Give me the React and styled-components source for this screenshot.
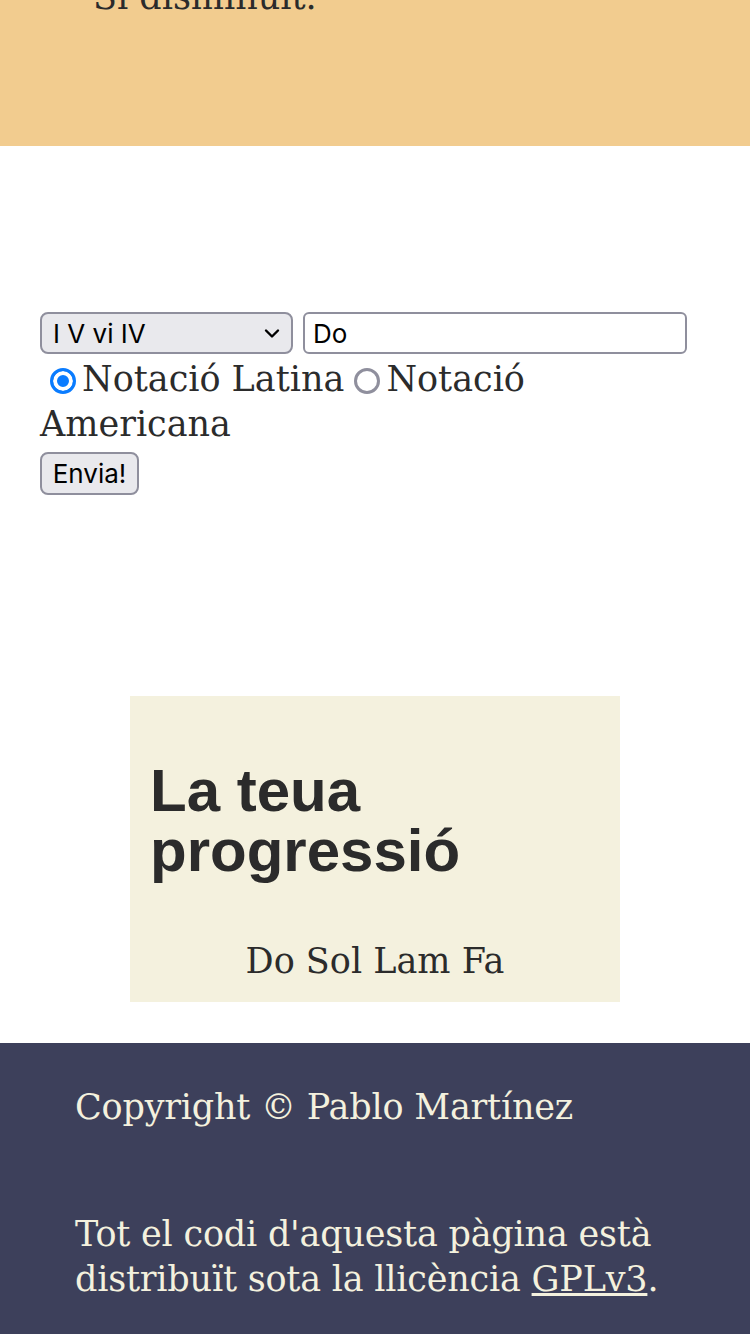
import React from 'react'
import styled, { createGlobalStyle } from 'styled-components'

const colors = {
  sand: '#f2cc8f',
  cream: '#f4f1de',
  navy: '#3d405b',
  ink: '#2b2b2b',
  control: '#e9e9ed',
  controlBorder: '#8f8f9d',
  blue: '#0a7cff',
}

const GlobalStyle = createGlobalStyle`
  html, body {
    margin: 0;
    padding: 0;
    background: #fff;
  }

  body {
    font-family: 'DejaVu Serif', Georgia, serif;
    font-size: 35px;
    line-height: 45px;
    color: ${colors.ink};
  }
`

const Banner = styled.header`
  background: ${colors.sand};
  height: 146px;
  padding: 0 93px;
  overflow: hidden;
`

const BannerText = styled.p`
  margin: -25px 0 0;
`

const Main = styled.main`
  padding: 166px 40px 0;
`

const Form = styled.form`
  display: flex;
  flex-direction: column;
  align-items: flex-start;
`

const Controls = styled.div`
  display: flex;
  align-items: flex-start;
  gap: 10px;
`

const SelectBox = styled.div`
  position: relative;
  width: 253px;
  height: 42px;
`

const Select = styled.select`
  appearance: none;
  display: block;
  width: 100%;
  height: 100%;
  box-sizing: border-box;
  margin: 0;
  padding: 0 40px 0 11px;
  background: ${colors.control};
  border: 2px solid ${colors.controlBorder};
  border-radius: 8px;
  font-family: Inter, 'Noto Sans', sans-serif;
  font-size: 26px;
  color: #000;
`

const Chevron = styled.svg`
  position: absolute;
  right: 12px;
  top: 12px;
  width: 18px;
  height: 18px;
  pointer-events: none;
`

const TextInput = styled.input`
  display: block;
  width: 384px;
  height: 42px;
  box-sizing: border-box;
  margin: 0;
  padding: 0 8px;
  background: #fff;
  border: 2px solid ${colors.controlBorder};
  border-radius: 6px;
  font-family: Inter, 'Noto Sans', sans-serif;
  font-size: 26px;
  color: #000;
`

const Choices = styled.div`
  margin-top: 3px;
`

const Radio = styled.input`
  appearance: none;
  box-sizing: border-box;
  width: 26px;
  height: 26px;
  margin: 0 6px 0 10px;
  vertical-align: -3px;
  border-radius: 50%;
  border: 3px solid ${(p) => (p.checked ? colors.blue : colors.controlBorder)};
  background: ${(p) => (p.checked ? colors.blue : '#fff')};
  box-shadow: ${(p) => (p.checked ? 'inset 0 0 0 4px #fff' : 'none')};
`

const Button = styled.button`
  margin-top: 5px;
  width: 99px;
  height: 43px;
  padding: 0;
  background: ${colors.control};
  border: 2px solid ${colors.controlBorder};
  border-radius: 8px;
  font-family: Inter, 'Noto Sans', sans-serif;
  font-size: 26px;
  color: #000;
`

const Card = styled.section`
  width: 490px;
  margin: 201px auto 0;
  box-sizing: border-box;
  padding: 65px 20px 18px;
  background: ${colors.cream};
`

const CardTitle = styled.h2`
  margin: 0;
  font-family: 'Liberation Sans', Arial, Helvetica, sans-serif;
  font-weight: 700;
  font-size: 60px;
  line-height: 60px;
  color: ${colors.ink};
`

const Progression = styled.p`
  margin: 58px 0 0;
  text-align: center;
`

const Footer = styled.footer`
  margin-top: 41px;
  padding: 42px 75px 60px;
  background: ${colors.navy};
  color: ${colors.cream};
`

const FooterText = styled.p`
  margin: ${(p) => (p.$gap ? '82px' : '0')} 0 0;
  letter-spacing: -0.2px;
`

const Link = styled.a`
  color: inherit;
  text-decoration: underline;
`

function App() {
  return (
    <>
      <GlobalStyle />
      <Banner>
        <BannerText>Si disminuït.</BannerText>
      </Banner>

      <Main>
        <Form onSubmit={(e) => e.preventDefault()}>
          <Controls>
            <SelectBox>
              <Select defaultValue="I V vi IV">
                <option>I V vi IV</option>
                <option>I IV V</option>
                <option>ii V I</option>
              </Select>
              <Chevron viewBox="0 0 18 18">
                <path d="M3 6.5l6 6 6-6" fill="none" stroke="#000" strokeWidth="2.4" strokeLinecap="round" strokeLinejoin="round" />
              </Chevron>
            </SelectBox>
            <TextInput type="text" defaultValue="Do" />
          </Controls>

          <Choices>
            <label>
              <Radio type="radio" name="notacio" checked readOnly />Notació Latina
            </label><label>
              <Radio type="radio" name="notacio" checked={false} readOnly />Notació Americana
            </label>
          </Choices>

          <Button type="submit">Envia!</Button>
        </Form>

        <Card>
          <CardTitle>La teua progressió</CardTitle>
          <Progression>Do Sol Lam Fa</Progression>
        </Card>
      </Main>

      <Footer>
        <FooterText>Copyright © Pablo Martínez</FooterText>
        <FooterText $gap>
          Tot el codi d'aquesta pàgina està distribuït sota la llicència <Link href="#">GPLv3</Link>.
        </FooterText>
      </Footer>
    </>
  )
}

export default App
